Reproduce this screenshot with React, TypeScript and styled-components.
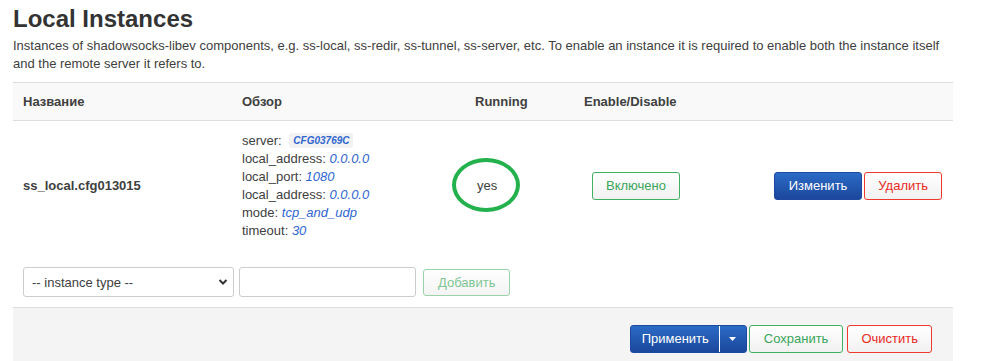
import styled, { createGlobalStyle, css } from "styled-components";

const textColor = "#404040";
const valueColor = "#2f66d0";
const borderColor = "#dddddd";

const GlobalStyle = createGlobalStyle`
  body {
    margin: 0;
    background: #ffffff;
    font-family: "Liberation Sans", Arial, sans-serif;
    font-size: 13px;
    color: ${textColor};
  }
`;

const overview = [
  { key: "local_address", value: "0.0.0.0" },
  { key: "local_port", value: "1080" },
  { key: "local_address", value: "0.0.0.0" },
  { key: "mode", value: "tcp_and_udp" },
  { key: "timeout", value: "30" },
];

export default function App() {
  return (
    <>
      <GlobalStyle />
      <Page>
        <Title>Local Instances</Title>
        <Descr>
          Instances of shadowsocks-libev components, e.g. ss-local, ss-redir,
          ss-tunnel, ss-server, etc. To enable an instance it is required to
          enable both the instance itself and the remote server it refers to.
        </Descr>

        <HeadRow>
          <HeadCell>Название</HeadCell>
          <HeadCell>Обзор</HeadCell>
          <HeadCell>Running</HeadCell>
          <HeadCell>Enable/Disable</HeadCell>
          <HeadCell />
        </HeadRow>

        <DataRow>
          <NameCell>ss_local.cfg013015</NameCell>
          <Cell>
            <Line>
              server: <Badge>CFG03769C</Badge>
            </Line>
            {overview.map((o, i) => (
              <Line key={i}>
                {o.key}: <Value>{o.value}</Value>
              </Line>
            ))}
          </Cell>
          <Cell>
            <Running>
              yes
              <Circle />
            </Running>
          </Cell>
          <Cell>
            <Button $variant="positive" $offset>
              Включено
            </Button>
          </Cell>
          <ActionCell>
            <Button $variant="primary" $pad={14}>
              Изменить
            </Button>
            <Button $variant="negative">Удалить</Button>
          </ActionCell>
        </DataRow>

        <AddRow>
          <SelectWrap>
            <Select defaultValue="">
              <option value="">-- instance type --</option>
            </Select>
            <Chevron viewBox="0 0 10 10">
              <path d="M1.5 3 L5 6.5 L8.5 3" fill="none" stroke="#333" strokeWidth="2" />
            </Chevron>
          </SelectWrap>
          <TextInput />
          <Button $variant="add" $pad={14}>
            Добавить
          </Button>
        </AddRow>

        <Footer>
          <Split>
            <SplitMain>Применить</SplitMain>
            <SplitCaret>
              <svg width="7" height="4" viewBox="0 0 7 4">
                <path d="M0 0 H7 L3.5 4 Z" fill="#ffffff" />
              </svg>
            </SplitCaret>
          </Split>
          <Button $variant="positive" $pad={14}>
            Сохранить
          </Button>
          <ClearButton $variant="negative">Очистить</ClearButton>
        </Footer>
      </Page>
    </>
  );
}

const Page = styled.div`
  width: 940px;
  padding-left: 13px;
`;

const Title = styled.h2`
  margin: 4px 0 0;
  font-size: 24px;
  line-height: 30px;
  font-weight: bold;
  color: #333333;
`;

const Descr = styled.p`
  margin: 3px 0 9px;
  font-size: 13px;
  line-height: 18px;
`;

const columns = css`
  display: grid;
  grid-template-columns: 219px 233px 109px 1fr auto;
  align-items: center;
`;

const HeadRow = styled.div`
  ${columns};
  height: 37px;
  background: #f9f9f9;
  border-top: 1px solid ${borderColor};
  border-bottom: 1px solid ${borderColor};
`;

const HeadCell = styled.div`
  padding: 0 10px;
  font-weight: bold;
  line-height: 18px;
`;

const DataRow = styled.div`
  ${columns};
  padding: 11px 0;
`;

const Cell = styled.div`
  padding: 0 10px;
  line-height: 18px;
`;

const NameCell = styled(Cell)`
  font-weight: bold;
`;

const ActionCell = styled(Cell)`
  display: flex;
  gap: 2px;
  padding-right: 11px;
`;

const Line = styled.div`
  line-height: 18px;
  white-space: nowrap;
`;

const Value = styled.em`
  color: ${valueColor};
`;

const Badge = styled.span`
  display: inline-block;
  margin-left: 4px;
  padding: 0 4px;
  line-height: 15px;
  font-size: 10px;
  font-weight: bold;
  font-style: italic;
  color: ${valueColor};
  background: #f2f2f2;
  border-radius: 3px;
  vertical-align: 1px;
`;

const Running = styled.span`
  position: relative;
  display: inline-block;
  margin-left: 2px;
`;

const Circle = styled.span`
  position: absolute;
  left: -25px;
  top: -19px;
  width: 60px;
  height: 46px;
  border: 4px solid #22b14c;
  border-radius: 50%;
`;

const variants = {
  primary: css`
    color: #ffffff;
    border-color: #1d4aa0;
    background: linear-gradient(#2b6bc6, #1b479c);
  `,
  positive: css`
    color: #3aa55a;
    border-color: #3eb062;
    background: linear-gradient(#ffffff, #f1f1f1);
  `,
  negative: css`
    color: #e8291f;
    border-color: #ec3a2c;
    background: linear-gradient(#ffffff, #f1f1f1);
  `,
  add: css`
    color: #7fc695;
    border-color: #9ad3aa;
    background: linear-gradient(#ffffff, #f3f3f3);
  `,
};

const Button = styled.button<{
  $variant: keyof typeof variants;
  $offset?: boolean;
  $pad?: number;
}>`
  height: 28px;
  padding: 0 ${(p) => p.$pad ?? 13}px;
  margin-left: ${(p) => (p.$offset ? 8 : 0)}px;
  border: 1px solid;
  border-radius: 3px;
  font-family: inherit;
  font-size: 13px;
  line-height: 26px;
  white-space: nowrap;
  cursor: pointer;
  ${(p) => variants[p.$variant]};
`;

const ClearButton = styled(Button)`
  margin-left: 2px;
`;

const AddRow = styled.div`
  display: flex;
  align-items: center;
  gap: 5px;
  padding: 16px 10px 10px;

  & > button {
    margin-left: 2px;
    height: 27px;
  }
`;

const fieldBase = css`
  box-sizing: border-box;
  height: 30px;
  border: 1px solid #cccccc;
  border-radius: 3px;
  background: #ffffff;
  font-family: inherit;
  font-size: 13px;
  color: ${textColor};
`;

const SelectWrap = styled.div`
  position: relative;
  width: 211px;
`;

const Select = styled.select`
  ${fieldBase};
  width: 100%;
  padding: 0 20px 0 8px;
  appearance: none;
`;

const Chevron = styled.svg`
  position: absolute;
  right: 6px;
  top: 10px;
  width: 10px;
  height: 10px;
  pointer-events: none;
`;

const TextInput = styled.input`
  ${fieldBase};
  width: 177px;
  padding: 0 8px;
`;

const Footer = styled.div`
  display: flex;
  justify-content: flex-end;
  gap: 2px;
  height: 60px;
  padding: 17px 21px 0;
  box-sizing: border-box;
  background: #f4f4f4;
  border-top: 1px solid ${borderColor};
`;

const Split = styled.div`
  display: flex;
  height: 28px;
  border: 1px solid #1d4aa0;
  border-radius: 3px;
  background: linear-gradient(#2b6bc6, #1b479c);
  box-sizing: border-box;
`;

const SplitMain = styled.span`
  padding: 0 10px 0 11px;
  line-height: 26px;
  color: #ffffff;
  border-right: 1px solid #ffffff;
`;

const SplitCaret = styled.span`
  display: flex;
  align-items: center;
  justify-content: center;
  width: 26px;
`;
